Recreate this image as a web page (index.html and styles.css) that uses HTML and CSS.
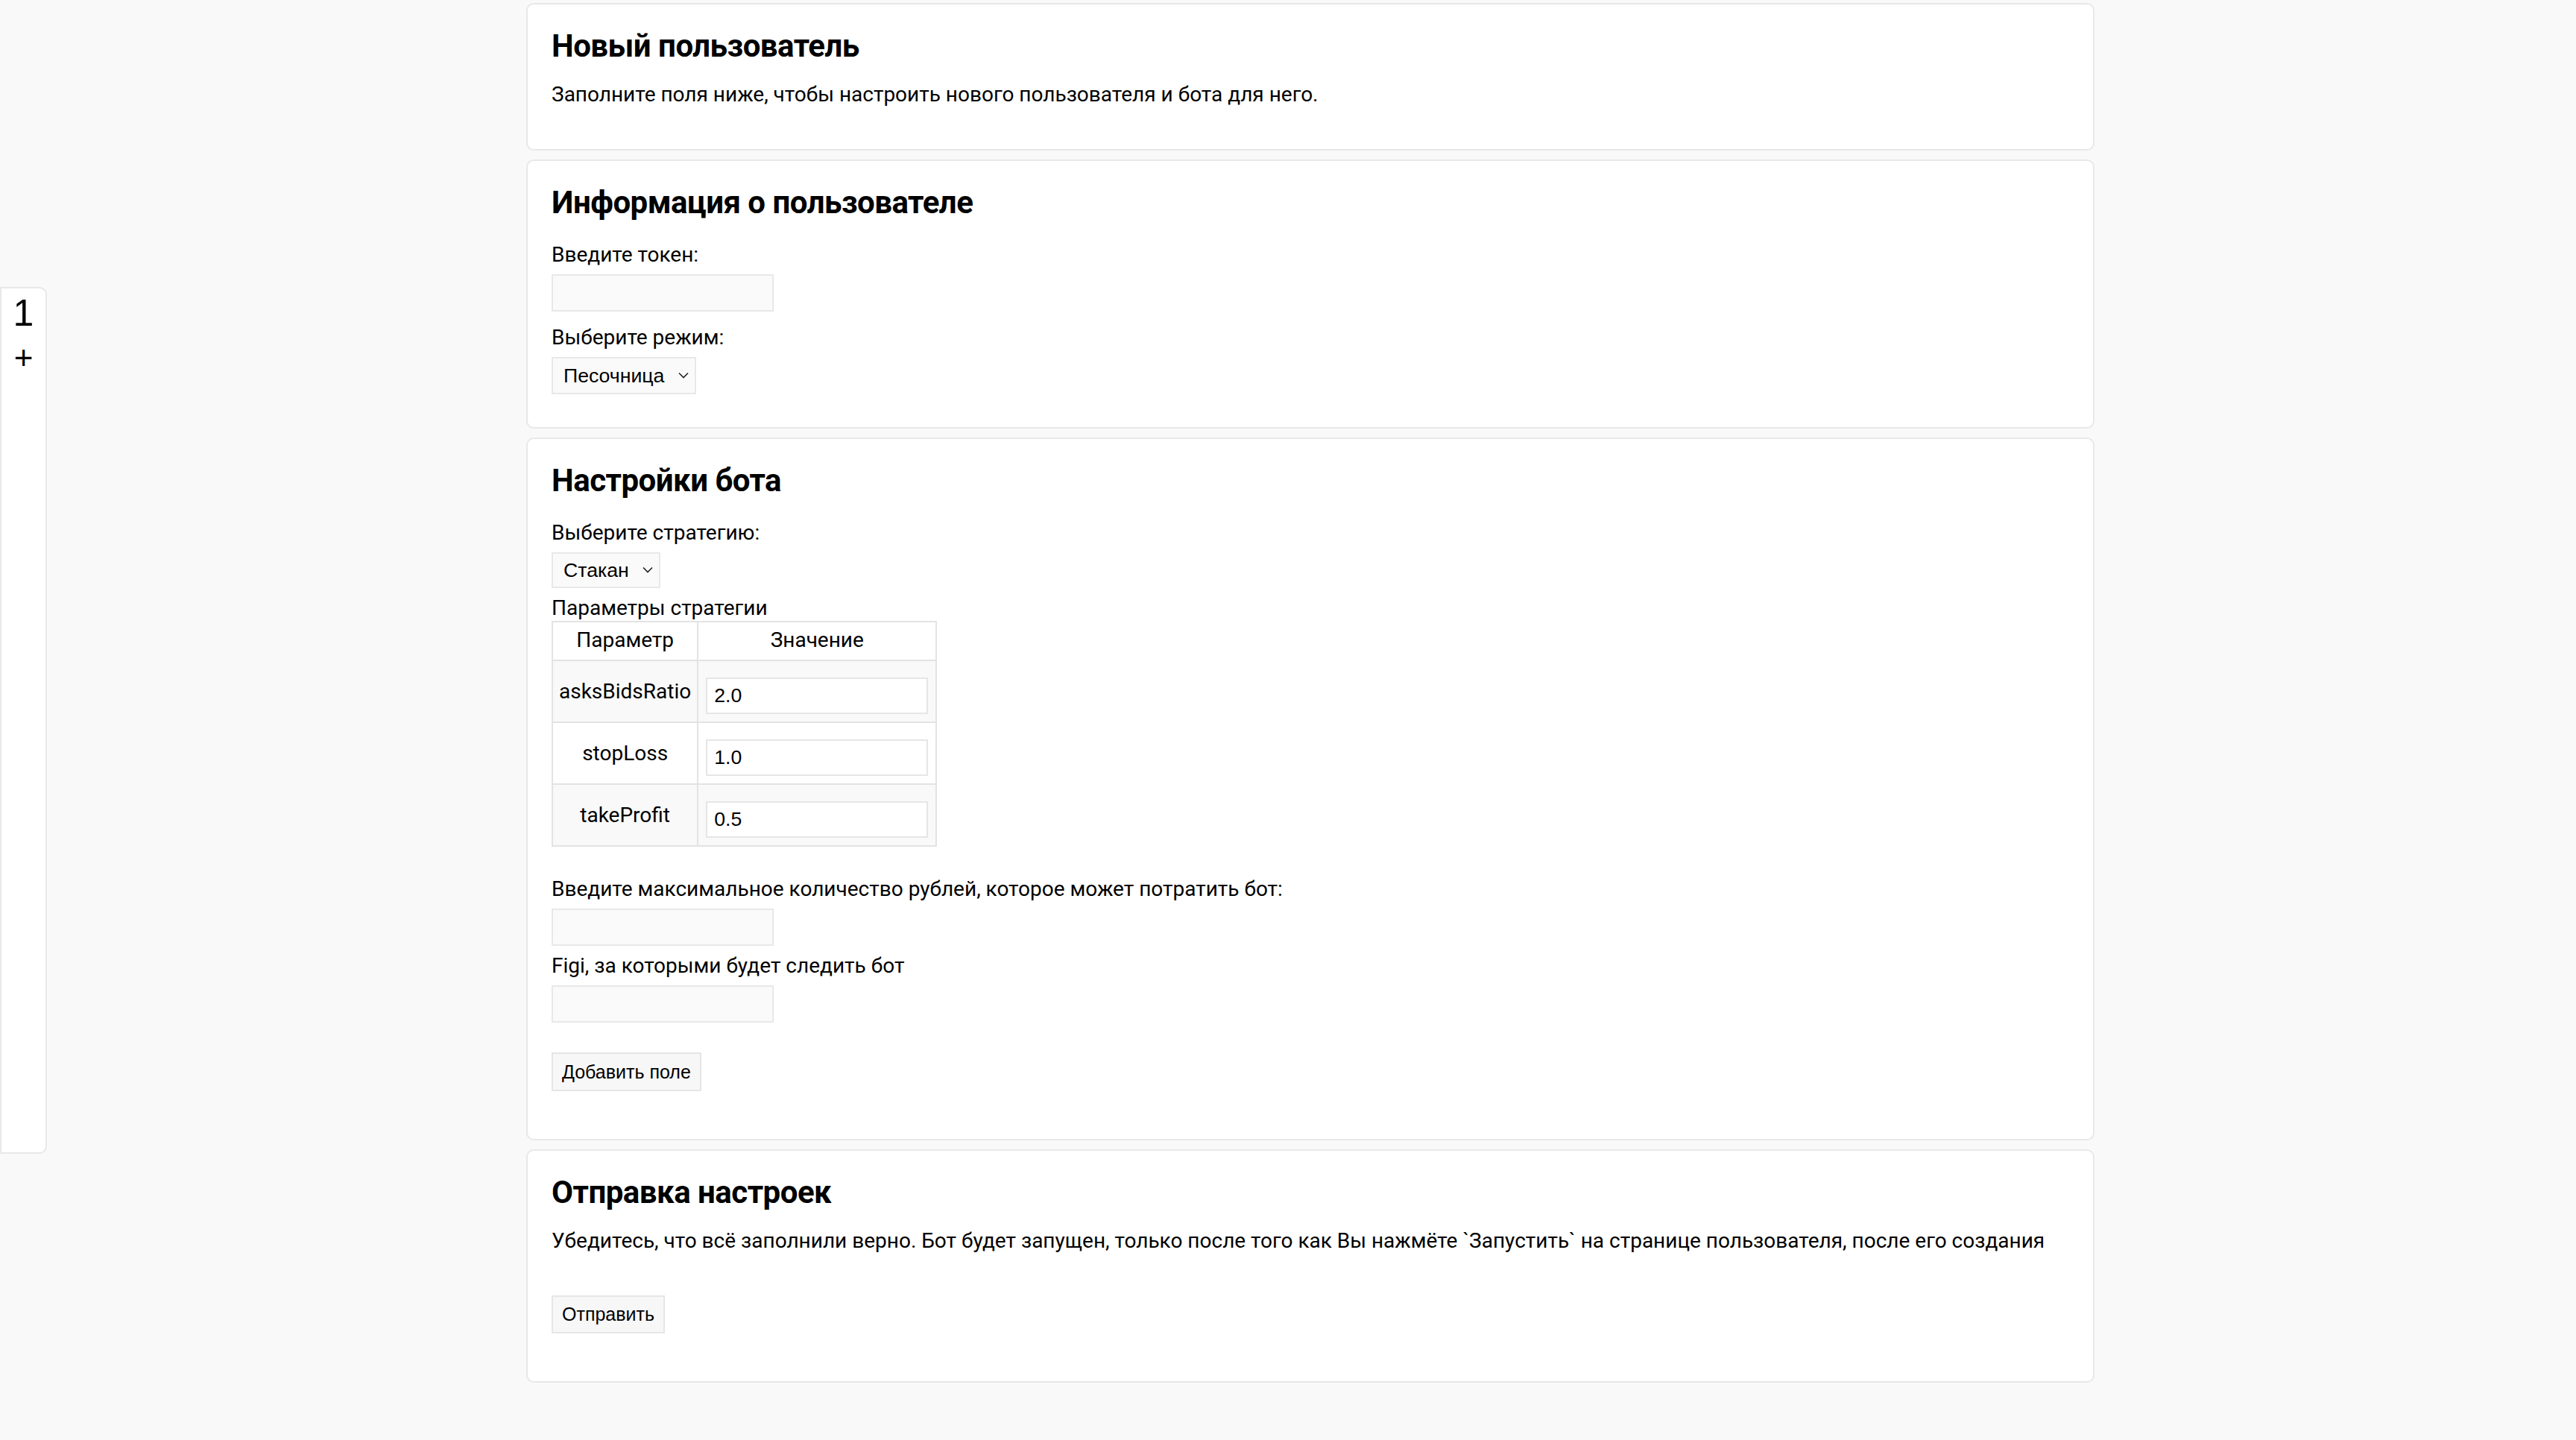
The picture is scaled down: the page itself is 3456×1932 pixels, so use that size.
FILE: index.html
```html
<!DOCTYPE html>
<html lang="ru">
<head>
<meta charset="utf-8">
<title>Новый пользователь</title>
<link rel="stylesheet" href="styles.css">
</head>
<body>
<div class="app">
  <aside class="sidebar">
    <div class="tab-num">1</div>
    <button class="tab-add" type="button">+</button>
  </aside>
  <main class="main">
    <div class="column">
      <section class="card">
        <h2 class="card-title">Новый пользователь</h2>
        <p class="card-text">Заполните поля ниже, чтобы настроить нового пользователя и бота для него.</p>
      </section>

      <section class="card">
        <h2 class="card-title">Информация о пользователе</h2>
        <div class="field field--first field--wide">
          <label class="label" for="token">Введите токен:</label>
          <input class="input" id="token" type="text">
        </div>
        <div class="field field--last">
          <label class="label" for="mode">Выберите режим:</label>
          <div class="select-wrap">
            <select class="select" id="mode"><option>Песочница</option></select>
            <svg class="chevron" width="14" height="9" viewBox="0 0 14 9"><path d="M1 1.5l6 6 6-6" fill="none" stroke="#222" stroke-width="1.6"/></svg>
          </div>
        </div>
      </section>

      <section class="card">
        <h2 class="card-title">Настройки бота</h2>
        <div class="field field--first">
          <label class="label" for="strategy">Выберите стратегию:</label>
          <div class="select-wrap">
            <select class="select select--short" id="strategy"><option>Стакан</option></select>
            <svg class="chevron" width="14" height="9" viewBox="0 0 14 9"><path d="M1 1.5l6 6 6-6" fill="none" stroke="#222" stroke-width="1.6"/></svg>
          </div>
        </div>
        <table class="params">
          <caption class="params-caption">Параметры стратегии</caption>
          <thead>
            <tr><th class="params-name">Параметр</th><th class="params-value-head">Значение</th></tr>
          </thead>
          <tbody>
            <tr class="params-row params-row--shade"><td class="params-name">asksBidsRatio</td><td class="params-value"><input class="input input--cell" type="text" value="2.0"></td></tr>
            <tr class="params-row"><td class="params-name">stopLoss</td><td class="params-value"><input class="input input--cell" type="text" value="1.0"></td></tr>
            <tr class="params-row params-row--shade"><td class="params-name">takeProfit</td><td class="params-value"><input class="input input--cell" type="text" value="0.5"></td></tr>
          </tbody>
        </table>
        <div class="field field--after-table">
          <label class="label" for="rub">Введите максимальное количество рублей, которое может потратить бот:</label>
          <input class="input" id="rub" type="text">
        </div>
        <div class="field">
          <label class="label" for="figi">Figi, за которыми будет следить бот</label>
          <input class="input" id="figi" type="text">
        </div>
        <button class="btn btn--add" type="button">Добавить поле</button>
      </section>

      <section class="card">
        <h2 class="card-title">Отправка настроек</h2>
        <p class="card-text">Убедитесь, что всё заполнили верно. Бот будет запущен, только после того как Вы нажмёте `Запустить` на странице пользователя, после его создания</p>
        <button class="btn btn--send" type="button">Отправить</button>
      </section>
    </div>
  </main>
</div>
</body>
</html>
```

FILE: styles.css
```css
* { box-sizing: border-box; }

html, body {
  margin: 0;
  padding: 0;
  background: #f9f9f9;
}

body {
  font-family: Roboto, "Noto Sans", sans-serif;
  font-size: 28px;
  line-height: 34px;
  color: #000;
}

.app {
  display: flex;
  min-height: 100vh;
}

/* sidebar */
.sidebar {
  flex: 0 0 63px;
  align-self: center;
  height: 1163px;
  background: #fff;
  border: 2px solid #e8e8e8;
  border-radius: 0 10px 10px 0;
  display: flex;
  flex-direction: column;
  align-items: center;
  padding-top: 8px;
}

.tab-num {
  font-family: "Liberation Sans", Arial, sans-serif;
  font-size: 50px;
  line-height: 50px;
}

.tab-add {
  margin-top: 13px;
  border: 0;
  background: none;
  padding: 0;
  font-family: "Liberation Sans", Arial, sans-serif;
  font-size: 44px;
  line-height: 44px;
  color: #000;
}

/* main column */
.main {
  flex: 1;
  display: flex;
  justify-content: center;
  padding: 4px 3px 0 0;
}

.column {
  width: 2104px;
  display: flex;
  flex-direction: column;
  gap: 12px;
}

.card {
  background: #fff;
  border: 2px solid #e8e8e8;
  border-radius: 10px;
  padding: 32px 32px 32px;
}

.card-title {
  margin: 0;
  font-size: 42px;
  line-height: 48px;
  font-weight: 700;
  letter-spacing: -0.5px;
}

.card-text {
  margin: 24px 0 24px;
  white-space: nowrap;
}

.field {
  margin-bottom: 10px;
}

.field--first { margin-top: 29px; }
.field--wide { margin-bottom: 18px; }
.field--last { margin-bottom: 12px; }
.field--after-table { margin-top: 40px; }

.label {
  display: block;
  margin-bottom: 9px;
}

.input {
  display: block;
  width: 298px;
  height: 50px;
  border: 2px solid #e8e8e8;
  background: #fafafa;
  border-radius: 0;
  padding: 0 9px;
  font-family: "Liberation Sans", Arial, sans-serif;
  font-size: 26.67px;
  color: #000;
  outline: none;
}

.input--cell {
  height: 49px;
  background: #fff;
  border-color: #e6e6e6;
}

.select-wrap {
  position: relative;
  width: fit-content;
}

.select {
  display: block;
  appearance: none;
  -webkit-appearance: none;
  height: 50px;
  border: 2px solid #e8e8e8;
  background: #fafafa;
  border-radius: 0;
  padding: 0 40px 0 14px;
  font-family: "Liberation Sans", Arial, sans-serif;
  font-size: 26.67px;
  color: #000;
  outline: none;
}

.select--short { height: 48px; }

.chevron {
  position: absolute;
  right: 10px;
  top: 50%;
  margin-top: -5px;
  pointer-events: none;
}

/* params table */
.params {
  margin-top: 10px;
  border-collapse: separate;
  border-spacing: 0;
  border-top: 2px solid #e3e3e3;
  border-left: 2px solid #e3e3e3;
}

.params-caption {
  caption-side: top;
  text-align: left;
}

.params th,
.params td {
  border-right: 2px solid #e3e3e3;
  border-bottom: 2px solid #e3e3e3;
}

.params th {
  font-weight: 400;
  padding: 7px 8px 9px;
  text-align: center;
}

.params-name {
  width: 195px;
  padding: 0 8px;
  text-align: center;
  vertical-align: middle;
}

.params-value-head {
  width: 320px;
}

.params-value {
  padding: 22px 10px 10px;
  vertical-align: top;
}

.params-row--shade td {
  background: #f9f9f9;
}

/* buttons */
.btn {
  display: block;
  height: 52px;
  padding: 0 12px;
  border: 2px solid #e6e6e6;
  background: #f7f7f7;
  border-radius: 0;
  font-family: "Liberation Sans", Arial, sans-serif;
  font-size: 25px;
  color: #000;
}

.btn--add { margin: 40px 0 32px; }
.btn--send { margin: 56px 0 32px; height: 51px; }
```
